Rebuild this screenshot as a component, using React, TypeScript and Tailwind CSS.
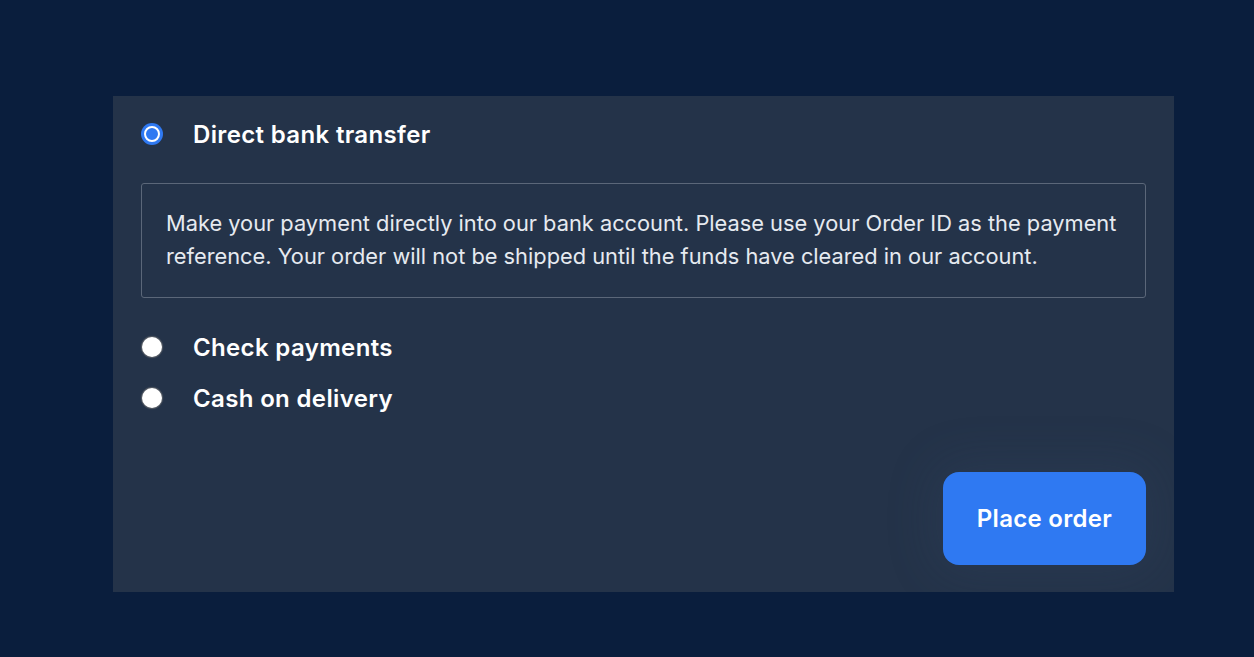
import { useState } from 'react';

interface PaymentMethod {
  id: string;
  label: string;
  description?: string;
}

const methods: PaymentMethod[] = [
  {
    id: 'bacs',
    label: 'Direct bank transfer',
    description:
      'Make your payment directly into our bank account. Please use your Order ID as the payment reference. Your order will not be shipped until the funds have cleared in our account.',
  },
  { id: 'cheque', label: 'Check payments' },
  { id: 'cod', label: 'Cash on delivery' },
];

const Radio = ({ checked }: { checked: boolean }) =>
  checked ? (
    <span className="w-[22px] h-[22px] -mt-[3px] rounded-full bg-[#2f79f2] flex items-center justify-center">
      <span className="w-[16px] h-[16px] rounded-full border-[2px] border-white bg-[#2f79f2]"></span>
    </span>
  ) : (
    <span className="w-[22px] h-[22px] -mt-[2px] flex items-center justify-center">
      <span className="w-[20px] h-[20px] rounded-full bg-white shadow-[0_0_1px_1px_rgba(120,120,120,0.6)]"></span>
    </span>
  );

export default function App() {
  const [selected, setSelected] = useState('bacs');

  return (
    <div className="w-full min-h-[657px] bg-[#0a1e3d] pt-[96px] px-[113px] font-['Inter',sans-serif]">
      <div className="w-[1061px] bg-[#243349] px-[28px] pt-[19px] pb-[27px] flex flex-col overflow-hidden">
        {methods.map((m, i) => (
          <div key={m.id} className={i === 1 ? 'mt-[30px]' : i === 2 ? 'mt-[11px]' : ''}>
            <button
              type="button"
              onClick={() => setSelected(m.id)}
              className="h-[40px] flex items-center gap-[30px]"
            >
              <Radio checked={selected === m.id} />
              <span className="text-[24px] font-semibold text-white tracking-[0.35px]">{m.label}</span>
            </button>
            {m.description && selected === m.id && (
              <div className="mt-[28px] border border-[#5b6779] rounded-[3px] pl-[24px] pr-[20px] pt-[23px] pb-6">
                <p className="text-[21.8px] leading-[33px] text-[#e6eaf0]">{m.description}</p>
              </div>
            )}
          </div>
        ))}
        <div className="flex justify-end mt-[53px]">
          <button
            type="button"
            className="w-[203px] h-[93px] rounded-[16px] bg-[#2f79f2] text-white text-[24px] font-semibold tracking-[0.3px] shadow-[0_0_50px_8px_rgba(60,80,110,0.2)]"
          >
            Place order
          </button>
        </div>
      </div>
    </div>
  );
}
